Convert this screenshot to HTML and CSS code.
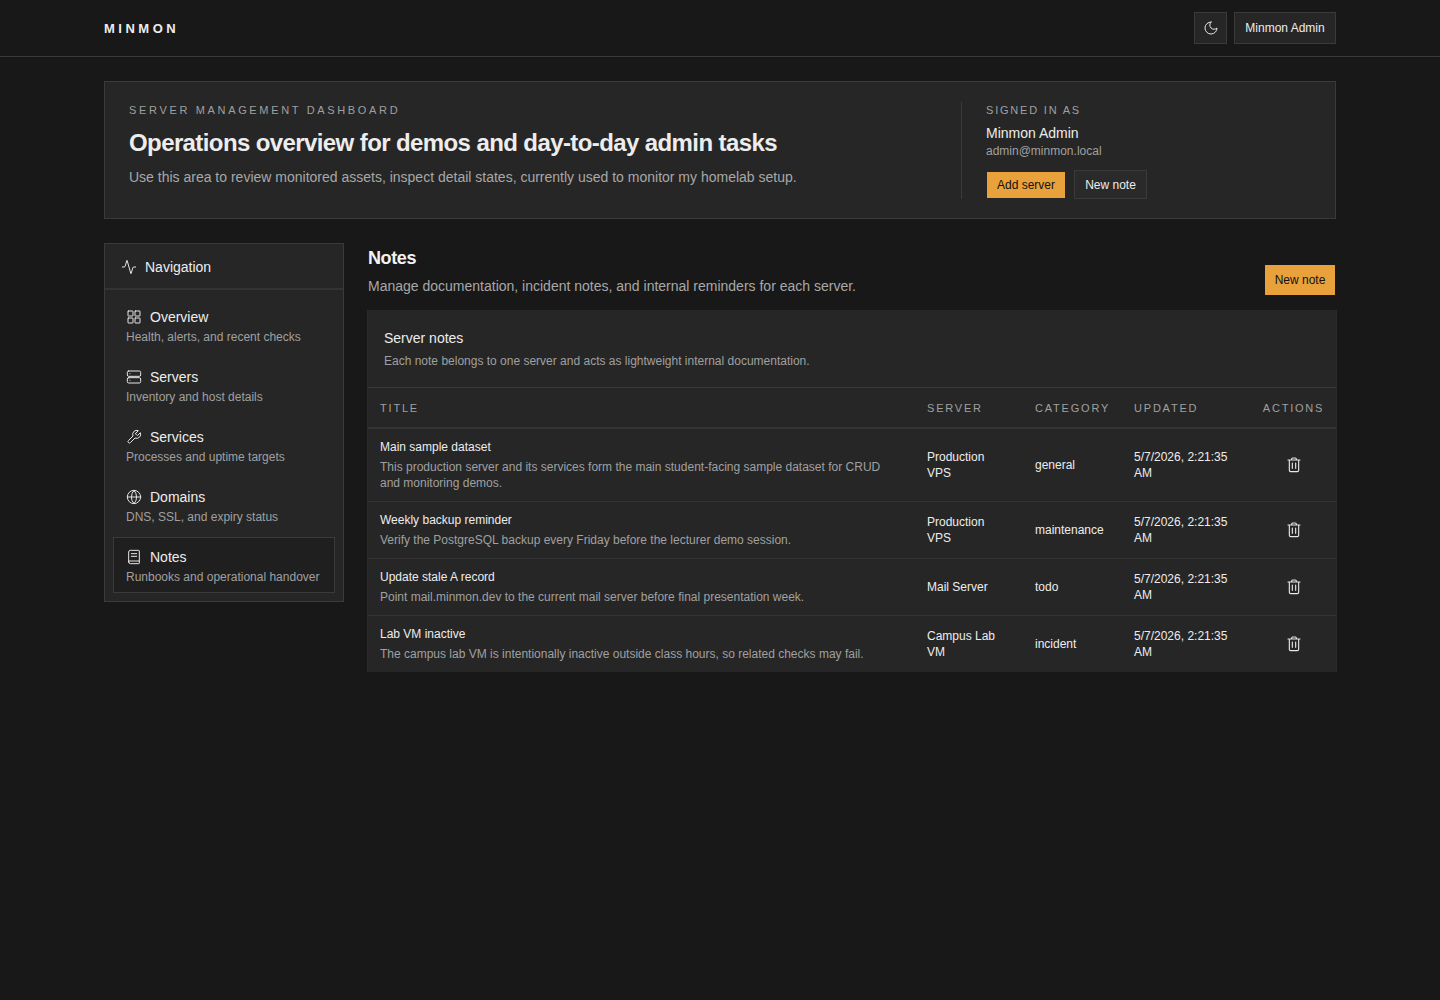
FILE: index.html
```html
<!DOCTYPE html>
<html lang="en">
  <head>
    <meta charset="UTF-8" />
    <meta name="viewport" content="width=device-width, initial-scale=1.0" />
    <title>Minmon - Notes</title>
    <link rel="stylesheet" href="styles.css">
  </head>
  <body>
    <header class="topbar">
      <div class="topbar-inner">
        <div class="brand">MINMON</div>
        <div class="topbar-actions">
          <button class="btn btn-icon" type="button">
            <svg class="icon" viewBox="0 0 24 24"><path d="M12 3a6 6 0 0 0 9 9 9 9 0 1 1-9-9Z"/></svg>
          </button>
          <button class="btn btn-user" type="button">Minmon Admin</button>
        </div>
      </div>
    </header>

    <div class="page">
      <section class="hero">
        <div class="hero-main">
          <div class="eyebrow">SERVER MANAGEMENT DASHBOARD</div>
          <h1>Operations overview for demos and day-to-day admin tasks</h1>
          <p>Use this area to review monitored assets, inspect detail states, currently used to monitor my homelab setup.</p>
        </div>
        <div class="hero-side">
          <div class="eyebrow eyebrow-small">SIGNED IN AS</div>
          <div class="hero-name">Minmon Admin</div>
          <div class="hero-mail">admin@minmon.local</div>
          <div class="hero-buttons">
            <button class="btn btn-primary" type="button">Add server</button>
            <button class="btn btn-ghost" type="button">New note</button>
          </div>
        </div>
      </section>

      <div class="layout">
        <aside class="sidebar">
          <div class="sidebar-head">
            <svg class="icon icon-nav" viewBox="0 0 24 24"><path d="M22 12h-2.5a2 2 0 0 0-1.900 1.500l-2.400 8.200a.25.25 0 0 1-.5 0L9.200 2.300a.25.25 0 0 0-.5 0l-2.300 8.200A2 2 0 0 1 4.500 12H2"/></svg>
            <span>Navigation</span>
          </div>
          <nav class="sidebar-list">
            <a class="nav-item">
              <div class="nav-title">
                <svg class="icon" viewBox="0 0 24 24"><rect x="3" y="3" width="7.500" height="7.500" rx="0.500"/><rect x="13.500" y="3" width="7.500" height="7.500" rx="0.500"/><rect x="13.500" y="13.500" width="7.500" height="7.500" rx="0.500"/><rect x="3" y="13.500" width="7.500" height="7.500" rx="0.500"/></svg>
                Overview
              </div>
              <div class="nav-sub">Health, alerts, and recent checks</div>
            </a>
            <a class="nav-item">
              <div class="nav-title">
                <svg class="icon" viewBox="0 0 24 24"><rect x="2" y="3" width="20" height="8" rx="2"/><rect x="2" y="13" width="20" height="8" rx="2"/><path d="M6 7h.01M6 17h.01"/></svg>
                Servers
              </div>
              <div class="nav-sub">Inventory and host details</div>
            </a>
            <a class="nav-item">
              <div class="nav-title">
                <svg class="icon" viewBox="0 0 24 24"><path d="M14.700 6.300a1 1 0 0 0 0 1.400l1.600 1.600a1 1 0 0 0 1.400 0l3.770-3.770a6 6 0 0 1-7.940 7.940l-6.910 6.910a2.120 2.120 0 0 1-3-3l6.910-6.910a6 6 0 0 1 7.940-7.940l-3.760 3.760Z"/></svg>
                Services
              </div>
              <div class="nav-sub">Processes and uptime targets</div>
            </a>
            <a class="nav-item">
              <div class="nav-title">
                <svg class="icon" viewBox="0 0 24 24"><circle cx="12" cy="12" r="10"/><path d="M12 2a14.500 14.500 0 0 0 0 20 14.500 14.500 0 0 0 0-20"/><path d="M2 12h20"/></svg>
                Domains
              </div>
              <div class="nav-sub">DNS, SSL, and expiry status</div>
            </a>
            <a class="nav-item active">
              <div class="nav-title">
                <svg class="icon" viewBox="0 0 24 24"><path d="M4 19.500v-15A2.500 2.500 0 0 1 6.500 2H19a1 1 0 0 1 1 1v18a1 1 0 0 1-1 1H6.500a2.500 2.500 0 0 1-2.500-2.500Z"/><path d="M4 18h16"/><path d="M8 7h8M8 11h8"/></svg>
                Notes
              </div>
              <div class="nav-sub">Runbooks and operational handover</div>
            </a>
          </nav>
        </aside>

        <main class="content">
          <div class="content-head">
            <div class="content-text">
              <h2>Notes</h2>
              <p>Manage documentation, incident notes, and internal reminders for each server.</p>
            </div>
            <button class="btn btn-primary btn-new" type="button">New note</button>
          </div>

          <section class="card">
            <div class="card-head">
              <h3>Server notes</h3>
              <p>Each note belongs to one server and acts as lightweight internal documentation.</p>
            </div>
            <table class="notes-table">
              <thead>
                <tr>
                  <th class="col-title">TITLE</th>
                  <th class="col-server">SERVER</th>
                  <th class="col-category">CATEGORY</th>
                  <th class="col-updated">UPDATED</th>
                  <th class="col-actions">ACTIONS</th>
                </tr>
              </thead>
              <tbody>
                <tr>
                  <td>
                    <div class="note-title">Main sample dataset</div>
                    <div class="note-body">This production server and its services form the main student-facing sample dataset for CRUD and monitoring demos.</div>
                  </td>
                  <td>Production VPS</td>
                  <td>general</td>
                  <td>5/7/2026, 2:21:35 AM</td>
                  <td class="cell-action"><svg class="icon icon-trash" viewBox="0 0 24 24"><path d="M3 4.500h18M8.500 4.500V3A1.500 1.500 0 0 1 10 1.500h4A1.500 1.500 0 0 1 15.500 3v1.500M5 4.500V20a2 2 0 0 0 2 2h10a2 2 0 0 0 2-2V4.500M9.500 9v8M14.500 9v8"/></svg></td>
                </tr>
                <tr>
                  <td>
                    <div class="note-title">Weekly backup reminder</div>
                    <div class="note-body">Verify the PostgreSQL backup every Friday before the lecturer demo session.</div>
                  </td>
                  <td>Production VPS</td>
                  <td>maintenance</td>
                  <td>5/7/2026, 2:21:35 AM</td>
                  <td class="cell-action"><svg class="icon icon-trash" viewBox="0 0 24 24"><path d="M3 4.500h18M8.500 4.500V3A1.500 1.500 0 0 1 10 1.500h4A1.500 1.500 0 0 1 15.500 3v1.500M5 4.500V20a2 2 0 0 0 2 2h10a2 2 0 0 0 2-2V4.500M9.500 9v8M14.500 9v8"/></svg></td>
                </tr>
                <tr>
                  <td>
                    <div class="note-title">Update stale A record</div>
                    <div class="note-body">Point mail.minmon.dev to the current mail server before final presentation week.</div>
                  </td>
                  <td>Mail Server</td>
                  <td>todo</td>
                  <td>5/7/2026, 2:21:35 AM</td>
                  <td class="cell-action"><svg class="icon icon-trash" viewBox="0 0 24 24"><path d="M3 4.500h18M8.500 4.500V3A1.500 1.500 0 0 1 10 1.500h4A1.500 1.500 0 0 1 15.500 3v1.500M5 4.500V20a2 2 0 0 0 2 2h10a2 2 0 0 0 2-2V4.500M9.500 9v8M14.500 9v8"/></svg></td>
                </tr>
                <tr>
                  <td>
                    <div class="note-title">Lab VM inactive</div>
                    <div class="note-body">The campus lab VM is intentionally inactive outside class hours, so related checks may fail.</div>
                  </td>
                  <td>Campus Lab VM</td>
                  <td>incident</td>
                  <td>5/7/2026, 2:21:35 AM</td>
                  <td class="cell-action"><svg class="icon icon-trash" viewBox="0 0 24 24"><path d="M3 4.500h18M8.500 4.500V3A1.500 1.500 0 0 1 10 1.500h4A1.500 1.500 0 0 1 15.500 3v1.500M5 4.500V20a2 2 0 0 0 2 2h10a2 2 0 0 0 2-2V4.500M9.500 9v8M14.500 9v8"/></svg></td>
                </tr>
              </tbody>
            </table>
          </section>
        </main>
      </div>
    </div>
  </body>
</html>
```

FILE: styles.css
```css
* {
  box-sizing: border-box;
}
body {
  margin: 0;
  min-height: 1000px;
  background-color: #181818;
  color: #ededed;
  font-family: "Liberation Sans", Arial, sans-serif;
  font-size: 12px;
}
h1, h2, h3, p {
  margin: 0;
}
.icon {
  display: block;
  width: 16px;
  height: 16px;
  fill: none;
  stroke: #e6e6e6;
  stroke-width: 1.5;
  stroke-linecap: round;
  stroke-linejoin: round;
  flex-shrink: 0;
}
.topbar {
  height: 57px;
  border-bottom: 1px solid #3a3a3a;
}
.topbar-inner {
  width: 1232px;
  height: 56px;
  margin: 0 auto;
  display: flex;
  align-items: center;
  justify-content: space-between;
}
.brand {
  font-size: 13px;
  font-weight: bold;
  letter-spacing: 3.5px;
}
.topbar-actions {
  display: flex;
  gap: 7px;
}
.btn {
  font-family: inherit;
  font-size: 12px;
  color: #ededed;
  background-color: #262626;
  border: 1px solid #3a3a3a;
  padding: 0 10px;
}
.btn-icon {
  width: 33px;
  height: 32px;
  padding: 0;
  display: flex;
  align-items: center;
  justify-content: center;
}
.btn-user {
  width: 102px;
  height: 32px;
  padding: 0;
}
.btn-primary {
  background-color: #e9a23b;
  background-clip: padding-box;
  border-color: transparent;
  color: #111111;
}
.btn-ghost {
  background-color: #2a2a2a;
}
.page {
  width: 1232px;
  margin: 24px auto 0;
}
.hero {
  height: 138px;
  background-color: #262626;
  border: 1px solid #3a3a3a;
  padding: 20px 24px;
  display: flex;
  justify-content: space-between;
}
.eyebrow {
  font-size: 11px;
  line-height: 16px;
  letter-spacing: 2.66px;
  color: #a0a0a0;
}
.eyebrow-small {
  letter-spacing: 1.8px;
}
.hero h1 {
  margin-top: 8px;
  font-size: 24px;
  line-height: 34px;
  letter-spacing: -0.6px;
  color: #ededed;
}
.hero p {
  margin-top: 7px;
  font-size: 14px;
  line-height: 20px;
  color: #a8a8a8;
}
.hero-side {
  width: 350px;
  height: 97px;
  border-left: 1px solid #3a3a3a;
  padding-left: 24px;
}
.hero-name {
  margin-top: 5px;
  font-size: 14px;
  line-height: 20px;
}
.hero-mail {
  font-size: 12px;
  line-height: 16px;
  color: #a0a0a0;
}
.hero-buttons {
  margin-top: 11px;
  display: flex;
  align-items: flex-end;
  gap: 8px;
}
.hero-buttons .btn-primary {
  width: 80px;
  height: 28px;
  padding: 0;
}
.hero-buttons .btn-ghost {
  width: 73px;
  height: 29px;
  padding: 0;
}
.layout {
  margin-top: 24px;
  display: grid;
  grid-template-columns: 240px 968px;
  gap: 24px;
  align-items: start;
}
.sidebar {
  background-color: #262626;
  border: 1px solid #3a3a3a;
}
.sidebar-head {
  height: 46px;
  display: flex;
  align-items: center;
  gap: 8px;
  padding: 2px 16px 0;
  font-size: 14px;
  border-bottom: 2px solid #333333;
}
.sidebar-list {
  padding: 7px 8px 8px;
  display: flex;
  flex-direction: column;
}
.nav-item {
  display: block;
  height: 60px;
  padding: 9px 12px 0;
  border: 1px solid transparent;
}
.nav-item.active {
  height: 56px;
  background-color: #1f1f1f;
  border-color: #3a3a3a;
}
.nav-title {
  display: flex;
  align-items: center;
  gap: 8px;
  font-size: 14px;
  line-height: 20px;
}
.nav-sub {
  font-size: 12px;
  line-height: 20px;
  color: #a0a0a0;
}
.content-head {
  height: 67px;
  display: flex;
  justify-content: space-between;
}
.content-text {
  padding-top: 1px;
}
.content-head h2 {
  font-size: 18px;
  line-height: 28px;
  letter-spacing: -0.4px;
  color: #f2f2f2;
}
.content-head p {
  margin-top: 4px;
  font-size: 14px;
  line-height: 20px;
  color: #a8a8a8;
}
.btn-new {
  align-self: flex-end;
  width: 72px;
  height: 32px;
  padding: 0;
  margin-bottom: 14px;
}
.card {
  background-color: #262626;
  box-shadow: -1px 0 0 #2a2a2a, 1px 0 0 #2a2a2a;
}
.card-head {
  height: 78px;
  padding: 17px 16px 0;
  border-bottom: 1px solid #3a3a3a;
}
.card-head h3 {
  font-size: 14px;
  font-weight: normal;
  line-height: 22px;
}
.card-head p {
  margin-top: 3px;
  font-size: 12px;
  line-height: 18px;
  color: #a0a0a0;
}
.notes-table {
  width: 100%;
  table-layout: fixed;
  border-collapse: collapse;
}
.notes-table th {
  height: 40px;
  padding: 0 12px;
  text-align: left;
  font-size: 11px;
  font-weight: normal;
  letter-spacing: 1.8px;
  color: #a0a0a0;
  border-bottom: 2px solid #333333;
}
.notes-table td {
  padding: 10px 12px;
  font-size: 12px;
  line-height: 16px;
  vertical-align: middle;
  border-bottom: 1px solid #333333;
}
.notes-table tbody tr:last-child td {
  border-bottom: none;
}
.col-title { width: 547px; }
.col-server { width: 108px; }
.col-category { width: 99px; }
.col-updated { width: 129px; }
.col-actions { width: 85px; }
.notes-table th.col-actions {
  text-align: center;
  padding: 0;
}
.note-title {
  color: #ededed;
  margin-bottom: 4px;
}
.note-body {
  color: #a0a0a0;
}
.cell-action {
  text-align: center;
}
.icon-trash {
  margin: 0 auto;
  stroke-width: 1.7;
}
```
